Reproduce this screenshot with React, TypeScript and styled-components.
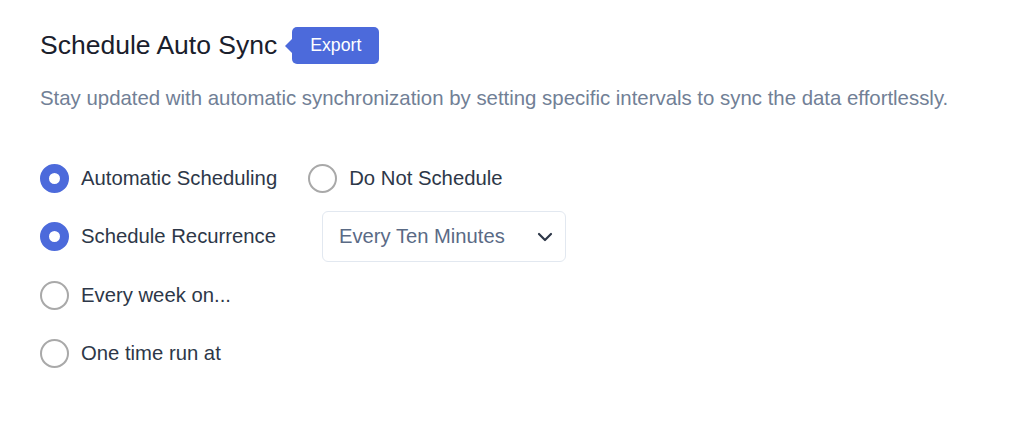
import React, { useState } from 'react';
import styled, { createGlobalStyle } from 'styled-components';

const GlobalStyle = createGlobalStyle`
  body {
    margin: 0;
    background: #fff;
    font-family: "Liberation Sans", Arial, Helvetica, sans-serif;
  }
`;

const Container = styled.div`
  padding: 27px 40px 0;
`;

const Header = styled.div`
  display: flex;
  align-items: center;
  height: 37px;
`;

const Title = styled.h1`
  margin: 0;
  font-size: 26.5px;
  font-weight: 400;
  color: #1a202c;
`;

const Badge = styled.span`
  position: relative;
  margin-left: 15px;
  height: 37px;
  padding: 0 18px;
  display: inline-flex;
  align-items: center;
  background: #4c6adb;
  color: #fff;
  font-size: 17.7px;
  border-radius: 5px;

  &::before {
    content: '';
    position: absolute;
    left: -7px;
    top: 50%;
    margin-top: -7px;
    border-style: solid;
    border-width: 7px 7px 7px 0;
    border-color: transparent #4c6adb transparent transparent;
  }
`;

const Subtitle = styled.p`
  margin: 22px 0 0;
  font-size: 20.4px;
  line-height: 24px;
  color: #718096;
  white-space: nowrap;
`;

const Options = styled.div`
  margin-top: 39px;
  display: flex;
  flex-direction: column;
`;

const Row = styled.div<{ $gap: number }>`
  display: flex;
  align-items: center;
  height: 58.5px;
  gap: ${p => p.$gap}px;
`;

const RadioLabel = styled.label`
  display: inline-flex;
  align-items: center;
  gap: 12px;
  font-size: 20.3px;
  color: #2d3748;
  cursor: pointer;
`;

const RadioCircle = styled.span<{ $checked: boolean }>`
  box-sizing: border-box;
  width: 29px;
  height: 29px;
  border-radius: 50%;
  flex-shrink: 0;
  background: #fff;
  border: ${p => (p.$checked ? '9.5px solid #4c6adb' : '2.5px solid #a9a9a9')};
`;

const HiddenInput = styled.input`
  display: none;
`;

const Select = styled.div`
  box-sizing: border-box;
  width: 244px;
  height: 51px;
  padding: 0 12px 0 16px;
  display: flex;
  align-items: center;
  justify-content: space-between;
  border: 1px solid #e2e8f0;
  border-radius: 6px;
  font-size: 20.2px;
  color: #5a6a85;
  cursor: pointer;
`;

const Chevron = () => (
  <svg width="16" height="10" viewBox="0 0 16 10" fill="none">
    <path d="M2 2 L8 8 L14 2" stroke="#2d3748" strokeWidth="2.2" strokeLinecap="round" strokeLinejoin="round" />
  </svg>
);

type RadioProps = {
  name: string;
  label: string;
  checked: boolean;
  onChange: () => void;
};

const Radio: React.FC<RadioProps> = ({ name, label, checked, onChange }) => (
  <RadioLabel>
    <HiddenInput type="radio" name={name} checked={checked} onChange={onChange} />
    <RadioCircle $checked={checked} />
    {label}
  </RadioLabel>
);

const App: React.FC = () => {
  const [mode, setMode] = useState('auto');
  const [kind, setKind] = useState('recurrence');

  return (
    <Container>
      <GlobalStyle />
      <Header>
        <Title>Schedule Auto Sync</Title>
        <Badge>Export</Badge>
      </Header>
      <Subtitle>
        Stay updated with automatic synchronization by setting specific intervals to sync the data effortlessly.
      </Subtitle>

      <Options>
        <Row $gap={31}>
          <Radio name="mode" label="Automatic Scheduling" checked={mode === 'auto'} onChange={() => setMode('auto')} />
          <Radio name="mode" label="Do Not Schedule" checked={mode === 'none'} onChange={() => setMode('none')} />
        </Row>
        <Row $gap={46}>
          <Radio name="kind" label="Schedule Recurrence" checked={kind === 'recurrence'} onChange={() => setKind('recurrence')} />
          <Select>
            Every Ten Minutes
            <Chevron />
          </Select>
        </Row>
        <Row $gap={0}>
          <Radio name="kind" label="Every week on..." checked={kind === 'week'} onChange={() => setKind('week')} />
        </Row>
        <Row $gap={0}>
          <Radio name="kind" label="One time run at" checked={kind === 'once'} onChange={() => setKind('once')} />
        </Row>
      </Options>
    </Container>
  );
};

export default App;
